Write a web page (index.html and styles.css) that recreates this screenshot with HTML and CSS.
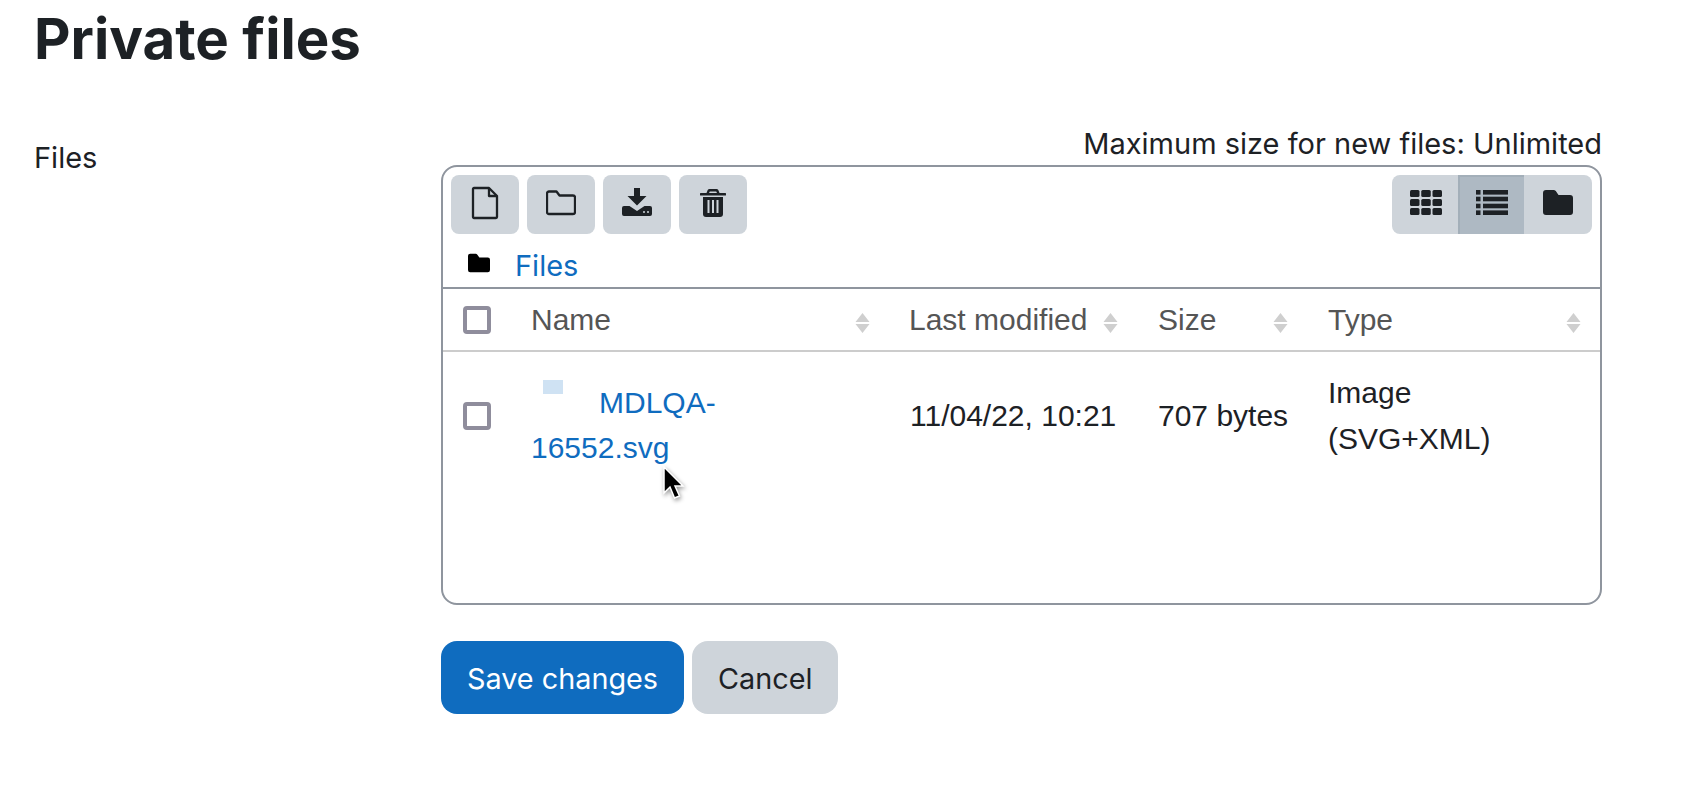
FILE: index.html
```html
<!DOCTYPE html>
<html lang="en">
<head>
<meta charset="utf-8">
<title>Private files</title>
<link rel="stylesheet" href="styles.css">
</head>
<body>
<main class="page">
  <h1 class="title">Private files</h1>
  <form class="form-row">
    <div class="form-label">Files</div>
    <div class="form-field">
      <div class="limit">Maximum size for new files: Unlimited</div>
      <div class="manager">
        <div class="toolbar">
          <div class="tool-group">
            <button type="button" class="tool" aria-label="Add file">
              <svg width="28" height="34" viewBox="0 0 28 34"><path class="line" d="M3 2h15l8 8v21a1 1 0 0 1-1 1H3a1 1 0 0 1-1-1V3a1 1 0 0 1 1-1z"/><path class="line" d="M18 2v8h8"/></svg>
            </button>
            <button type="button" class="tool" aria-label="Create folder">
              <svg width="30" height="26" viewBox="0 0 30 26"><path class="line" d="M3 1.500h7.500l3 4H27a2 2 0 0 1 2 2V22a2 2 0 0 1-2 2H3a2 2 0 0 1-2-2V3.500a2 2 0 0 1 2-2z"/></svg>
            </button>
            <button type="button" class="tool" aria-label="Download">
              <svg class="raise" width="30" height="28" viewBox="0 0 30 28"><path class="solid" d="M12 0h6v8h6.500L15 17.500 5.500 8H12z"/><path class="solid" d="M2 18h5.500l7.500 5 7.500-5H28a2 2 0 0 1 2 2v6a2 2 0 0 1-2 2H2a2 2 0 0 1-2-2v-6a2 2 0 0 1 2-2z"/><circle class="cut" cx="22" cy="24" r="1"/><circle class="cut" cx="26" cy="24" r="1"/></svg>
            </button>
            <button type="button" class="tool" aria-label="Delete">
              <svg width="26" height="28" viewBox="0 0 26 28"><path class="solid" d="M9.500 0h7a2 2 0 0 1 1.800 1.100L19.500 4H25a1 1 0 0 1 0 2.600H1A1 1 0 0 1 1 4h5.500l1.200-2.900A2 2 0 0 1 9.500 0zM9 4h8l-.8-1.600H9.800z"/><path class="solid" d="M3 8h20v17a3 3 0 0 1-3 3H6a3 3 0 0 1-3-3z"/><path class="cut" d="M7.500 11h2v13h-2zM12 11h2v13h-2zM16.500 11h2v13h-2z"/></svg>
            </button>
          </div>
          <div class="view-group">
            <button type="button" class="view" aria-label="Icons">
              <svg width="32" height="25" viewBox="0 0 32 25"><g class="solid"><rect width="9.500" height="7" rx="1.500"/><rect x="11.250" width="9.500" height="7" rx="1.500"/><rect x="22.500" width="9.500" height="7" rx="1.500"/><rect y="9" width="9.500" height="7" rx="1.500"/><rect x="11.250" y="9" width="9.500" height="7" rx="1.500"/><rect x="22.500" y="9" width="9.500" height="7" rx="1.500"/><rect y="18" width="9.500" height="7" rx="1.500"/><rect x="11.250" y="18" width="9.500" height="7" rx="1.500"/><rect x="22.500" y="18" width="9.500" height="7" rx="1.500"/></g></svg>
            </button>
            <button type="button" class="view view-active" aria-label="List">
              <svg width="32" height="25" viewBox="0 0 32 25"><g class="solid"><rect width="4.500" height="4.600"/><rect x="7" width="25" height="4.600"/><rect y="6.700" width="4.500" height="4.600"/><rect x="7" y="6.700" width="25" height="4.600"/><rect y="13.700" width="4.500" height="4.600"/><rect x="7" y="13.700" width="25" height="4.600"/><rect y="20.400" width="4.500" height="4.600"/><rect x="7" y="20.400" width="25" height="4.600"/></g></svg>
            </button>
            <button type="button" class="view" aria-label="Tree">
              <svg width="30" height="25" viewBox="0 0 30 25"><path class="solid" d="M3 0h7.500a3 3 0 0 1 2.300 1.100L15.500 5H27a3 3 0 0 1 3 3v14a3 3 0 0 1-3 3H3a3 3 0 0 1-3-3V3a3 3 0 0 1 3-3z"/></svg>
            </button>
          </div>
        </div>
        <div class="path">
          <svg class="path-icon" width="22" height="20" viewBox="0 0 30 25"><path d="M3 0h7.500a3 3 0 0 1 2.300 1.100L15.500 5H27a3 3 0 0 1 3 3v14a3 3 0 0 1-3 3H3a3 3 0 0 1-3-3V3a3 3 0 0 1 3-3z"/></svg>
          <a class="link" href="#">Files</a>
        </div>
        <table class="files">
          <thead>
            <tr>
              <th class="c-check"><span class="check"></span></th>
              <th class="c-name"><div class="head">Name<svg class="sort" width="15" height="20" viewBox="0 0 15 20"><path d="M7.500 0l7 9H.5zM.5 11h14l-7 9z"/></svg></div></th>
              <th class="c-date"><div class="head">Last modified<svg class="sort" width="15" height="20" viewBox="0 0 15 20"><path d="M7.500 0l7 9H.5zM.5 11h14l-7 9z"/></svg></div></th>
              <th class="c-size"><div class="head">Size<svg class="sort" width="15" height="20" viewBox="0 0 15 20"><path d="M7.500 0l7 9H.5zM.5 11h14l-7 9z"/></svg></div></th>
              <th class="c-type"><div class="head">Type<svg class="sort" width="15" height="20" viewBox="0 0 15 20"><path d="M7.500 0l7 9H.5zM.5 11h14l-7 9z"/></svg></div></th>
            </tr>
          </thead>
          <tbody>
            <tr>
              <td class="c-check"><span class="check"></span></td>
              <td class="c-name"><a class="link" href="#"><svg class="thumb" width="68" height="50" viewBox="0 0 68 50"><rect x="12" y="17" width="20" height="14"/></svg>MDLQA-16552.svg</a></td>
              <td class="c-date">11/04/22, 10:21</td>
              <td class="c-size">707 bytes</td>
              <td class="c-type">Image (SVG+XML)</td>
            </tr>
          </tbody>
        </table>
      </div>
      <div class="actions">
        <button type="button" class="btn btn-primary">Save changes</button>
        <button type="button" class="btn btn-secondary">Cancel</button>
      </div>
    </div>
  </form>
  <svg class="cursor" width="22" height="34" viewBox="0 0 22 34"><path d="M2 1v26l6-6 4.500 11 5-2L13 20h8z"/></svg>
</main>
</body>
</html>
```
FILE: styles.css
```css
* { box-sizing: border-box; }
html, body { margin: 0; background: #fff; }
body {
  font-family: Inter, "Liberation Sans", sans-serif;
  font-size: 29px;
  color: #1d2125;
  height: 786px;
  overflow: hidden;
}
.page { position: relative; padding: 0 94px 0 34px; }
.title {
  margin: 0;
  font-size: 56.4px;
  line-height: 78px;
  font-weight: 700;
  height: 128px;
}
.form-row { display: grid; grid-template-columns: 407px 1fr; }
.form-label { line-height: 40px; padding-top: 10px; }
.form-field { min-width: 0; }
.limit { text-align: right; line-height: 32px; height: 37px; }
.manager {
  border: 2px solid #8f959e;
  border-radius: 16px;
  height: 440px;
  font-family: "Liberation Sans", Arial, sans-serif;
  font-size: 30px;
}
.toolbar {
  display: flex;
  justify-content: space-between;
  padding: 8px 8px 0;
}
.tool-group { display: flex; gap: 8px; }
.tool, .view {
  display: flex;
  align-items: center;
  justify-content: center;
  height: 59px;
  border: 0;
  padding: 0 0 4px;
  background: #ced4da;
}
.tool { width: 68px; border-radius: 8px; }
.raise { margin-top: -2px; }
.view-group { display: flex; border-radius: 8px; overflow: hidden; }
.view { width: 66px; padding-left: 2px; }
.view:last-child { width: 68px; padding-left: 0; }
.view-active { background: #aeb9c3; box-shadow: inset 0 2px 0 #a3afb9, inset 2px 0 0 #a3afb9; }
.line { fill: none; stroke: #1d2125; stroke-width: 2.300; stroke-linejoin: round; }
.solid { fill: #1d2125; }
.cut { fill: #ced4da; }
.path {
  display: flex;
  align-items: center;
  height: 55px;
  padding: 10px 0 0 25px;
  gap: 25px;
  border-bottom: 2px solid #8f959e;
  font-family: Inter, "Liberation Sans", sans-serif;
  font-size: 29px;
}
.path-icon { fill: #000; margin-top: -5px; }
.link { color: #0f6cbf; text-decoration: none; }
.files {
  width: 100%;
  table-layout: fixed;
  border-collapse: collapse;
  line-height: 44px;
}
.files th {
  height: 62px;
  padding: 0 0 0 11px;
  border-bottom: 2px solid #cccccc;
  font-weight: 400;
  text-align: left;
  color: #555555;
}
.files th.c-date { padding-left: 10px; }
.files td { height: 128px; padding: 0 0 0 11px; vertical-align: middle; }
.c-check { width: 77px; }
.files th.c-check, .files td.c-check { padding: 0 0 0 20px; }
.c-name { width: 379px; }
.c-date { width: 248px; }
.c-size { width: 170px; }
.files td.c-name { padding: 2px 90px 0 11px; line-height: 45px; }
.files td.c-type { padding-right: 40px; line-height: 46px; }
.head { display: flex; align-items: center; justify-content: space-between; padding-right: 29px; }
.c-type .head { padding-right: 19px; }
.sort { fill: #cfcfcf; margin-top: 6px; }
.check {
  display: block;
  width: 28px;
  height: 28px;
  border: 4px solid #8f8d9c;
  border-radius: 4px;
  background: #fff;
}
.thumb rect { fill: #cfe2f3; }
.actions { display: flex; gap: 8px; padding-top: 36px; }
.btn {
  height: 73px;
  border: 0;
  border-radius: 16px;
  padding: 2px 26px 0;
  font: 28.8px Inter, "Liberation Sans", sans-serif;
}
.btn-primary { background: #0f6cbf; color: #fff; }
.btn-secondary { background: #ced4da; color: #1d2125; }
.cursor {
  position: absolute;
  left: 662px;
  top: 466px;
  overflow: visible;
  filter: drop-shadow(1px 2px 2px rgba(0,0,0,.4));
}
.cursor path { fill: #000; stroke: #fff; stroke-width: 1.500; }
```
